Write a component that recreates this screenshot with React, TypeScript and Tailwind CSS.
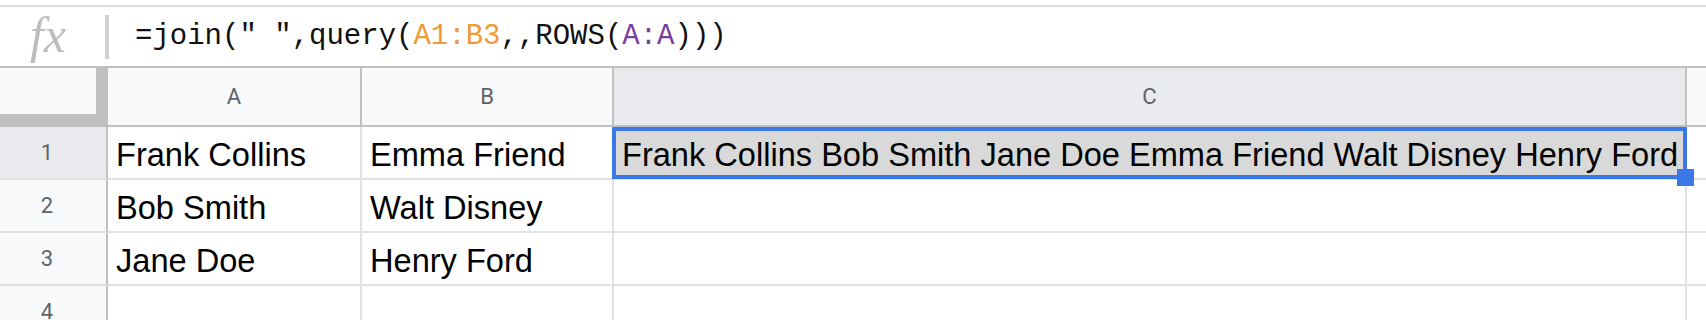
const columns = [
  { key: "A", width: "w-[254px]" },
  { key: "B", width: "w-[252px]" },
  { key: "C", width: "w-[1073px]" },
];

const rows = [
  ["Frank Collins", "Emma Friend", "Frank Collins Bob Smith Jane Doe Emma Friend Walt Disney Henry Ford"],
  ["Bob Smith", "Walt Disney", ""],
  ["Jane Doe", "Henry Ford", ""],
  ["", "", ""],
];

function FormulaBar() {
  return (
    <div className="mt-[5px] flex h-[63px] items-center border-y-2 border-t-[#dadce0] border-b-[#c0c0c0] bg-white">
      <div className="flex w-[96px] justify-center">
        <span className="mb-[4px] font-['Liberation_Serif',serif] text-[50px] italic leading-none text-[#bdbdbd]">fx</span>
      </div>
      <div className="ml-[9px] h-[44px] w-[4px] bg-[#cfcfcf]" />
      <div className="ml-[26px] font-['Liberation_Mono',monospace] text-[29px] leading-none text-[#111]">
        =join(" ",query(<span className="text-[#ef9a36]">A1:B3</span>,,ROWS(
        <span className="text-[#7b3e9e]">A:A</span>)))
      </div>
    </div>
  );
}

function HeaderRow() {
  return (
    <div className="flex h-[59px]">
      <div className="w-[108px] shrink-0 border-r-[12px] border-b-[13px] border-[#c0c0c0] bg-[#f8f9fa]" />
      {columns.map((c) => (
        <div
          key={c.key}
          className={
            c.width +
            " flex shrink-0 items-center justify-center border-r-2 border-b-2 border-[#c0c0c0] font-['Roboto',sans-serif] text-[22px] text-[#5f6368] " +
            (c.key === "C" ? "bg-[#e8eaed]" : "bg-[#f8f9fa]")
          }
        >
          {c.key}
        </div>
      ))}
      <div className="flex-1 border-b-2 border-[#c0c0c0] bg-[#f8f9fa]" />
    </div>
  );
}

function DataRow({ index, cells }: { index: number; cells: string[] }) {
  const selected = index === 1;
  return (
    <div className="flex h-[53px]">
      <div
        className={
          "flex w-[108px] shrink-0 items-center justify-center border-r-2 border-b-2 border-r-[#c0c0c0] border-b-[#e1e1e1] pr-[12px] font-['Roboto',sans-serif] text-[22px] text-[#5f6368] " +
          (selected ? "bg-[#e8eaed]" : "bg-[#f8f9fa]")
        }
      >
        {index}
      </div>
      {cells.map((text, i) => (
        <div
          key={i}
          className={
            columns[i].width +
            " relative flex shrink-0 items-center border-r-2 border-b-2 border-[#e1e1e1] pt-[5px] pl-[8px] text-[32.6px] whitespace-nowrap text-black " +
            (selected && i === 2 ? "bg-[#d9d9d9]" : "bg-white")
          }
        >
          {text}
          {selected && i === 2 && (
            <>
              <div className="pointer-events-none absolute top-0 right-[-2px] bottom-[-1px] left-[-2px] z-10 border-4 border-[#3b78e7]" />
              <div className="absolute right-[-9px] bottom-[-8px] z-10 h-[17px] w-[17px] bg-[#3b78e7]" />
            </>
          )}
        </div>
      ))}
      <div className="flex-1 border-b-2 border-[#e1e1e1] bg-white" />
    </div>
  );
}

export default function App() {
  return (
    <div className="h-[320px] w-[1706px] overflow-hidden bg-white font-['Liberation_Sans',Arial,sans-serif]">
      <FormulaBar />
      <HeaderRow />
      {rows.map((cells, i) => (
        <DataRow key={i} index={i + 1} cells={cells} />
      ))}
    </div>
  );
}
